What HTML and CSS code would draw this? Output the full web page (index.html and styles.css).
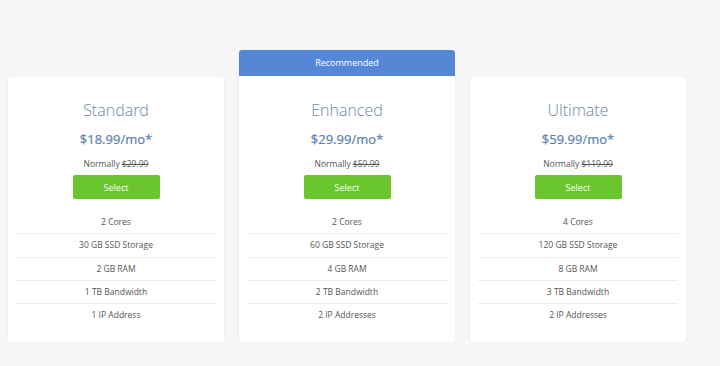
FILE: index.html
```html
<!DOCTYPE html>
<html>
<head>
<meta charset="utf-8">
<link rel="stylesheet" href="styles.css">
</head>
<body>
<div class="plans">
  <div class="plan">
    <div class="card">
      <h2 class="name">Standard</h2>
      <div class="price">$18.99/mo*</div>
      <div class="normal">Normally <s>$29.99</s></div>
      <button class="select">Select</button>
      <ul class="features">
        <li>2 Cores</li>
        <li>30 GB SSD Storage</li>
        <li>2 GB RAM</li>
        <li>1 TB Bandwidth</li>
        <li>1 IP Address</li>
      </ul>
    </div>
  </div>
  <div class="plan">
    <div class="banner">Recommended</div>
    <div class="card card-rec">
      <h2 class="name">Enhanced</h2>
      <div class="price">$29.99/mo*</div>
      <div class="normal">Normally <s>$59.99</s></div>
      <button class="select">Select</button>
      <ul class="features">
        <li>2 Cores</li>
        <li>60 GB SSD Storage</li>
        <li>4 GB RAM</li>
        <li>2 TB Bandwidth</li>
        <li>2 IP Addresses</li>
      </ul>
    </div>
  </div>
  <div class="plan">
    <div class="card">
      <h2 class="name">Ultimate</h2>
      <div class="price">$59.99/mo*</div>
      <div class="normal">Normally <s>$119.99</s></div>
      <button class="select">Select</button>
      <ul class="features">
        <li>4 Cores</li>
        <li>120 GB SSD Storage</li>
        <li>8 GB RAM</li>
        <li>3 TB Bandwidth</li>
        <li>2 IP Addresses</li>
      </ul>
    </div>
  </div>
</div>
</body>
</html>
```

FILE: styles.css
```css
html, body {
  margin: 0;
  padding: 0;
  background: #f6f6f6;
  font-family: "Open Sans", "Liberation Sans", sans-serif;
}
.plans {
  display: flex;
  align-items: flex-end;
  gap: 15px;
  padding: 0 0 0 8px;
  height: 342px;
}
.plan {
  width: 216px;
  display: flex;
  flex-direction: column;
}
.banner {
  height: 26px;
  line-height: 26px;
  background: #5686d6;
  color: #fff;
  font-size: 9px;
  text-align: center;
  border-radius: 3px 3px 0 0;
}
.card {
  background: #fff;
  height: 265px;
  border-radius: 3px;
  box-shadow: 0 1px 2px rgba(0, 0, 0, 0.08);
  padding-top: 22px;
  box-sizing: border-box;
  text-align: center;
  display: flex;
  flex-direction: column;
  align-items: center;
}
.card-rec {
  border-radius: 0 0 3px 3px;
  height: 266px;
  padding-top: 23px;
}
.name {
  margin: 0;
  font-size: 16px;
  line-height: 22px;
  font-weight: 300;
  color: #7287a6;
}
.price {
  margin-top: 9px;
  font-size: 13px;
  line-height: 18px;
  font-weight: 400;
  color: #5e7db2;
  -webkit-text-stroke: 0.2px #5e7db2;
}
.normal {
  margin-top: 10px;
  font-size: 8.5px;
  line-height: 12px;
  color: #555;
}
.normal s {
  color: #555;
}
.select {
  margin-top: 5px;
  width: 87px;
  height: 24px;
  border: 0;
  border-radius: 2px;
  background: #6bc52c;
  color: #fff;
  font-family: inherit;
  font-size: 9px;
  padding: 0;
}
.features {
  list-style: none;
  margin: 12px 0 0;
  padding: 0;
  width: 200px;
}
.features li {
  font-size: 8.5px;
  line-height: 22.25px;
  color: #555;
  border-bottom: 1px solid #ececec;
}
.features li:last-child {
  border-bottom: 0;
}
```
